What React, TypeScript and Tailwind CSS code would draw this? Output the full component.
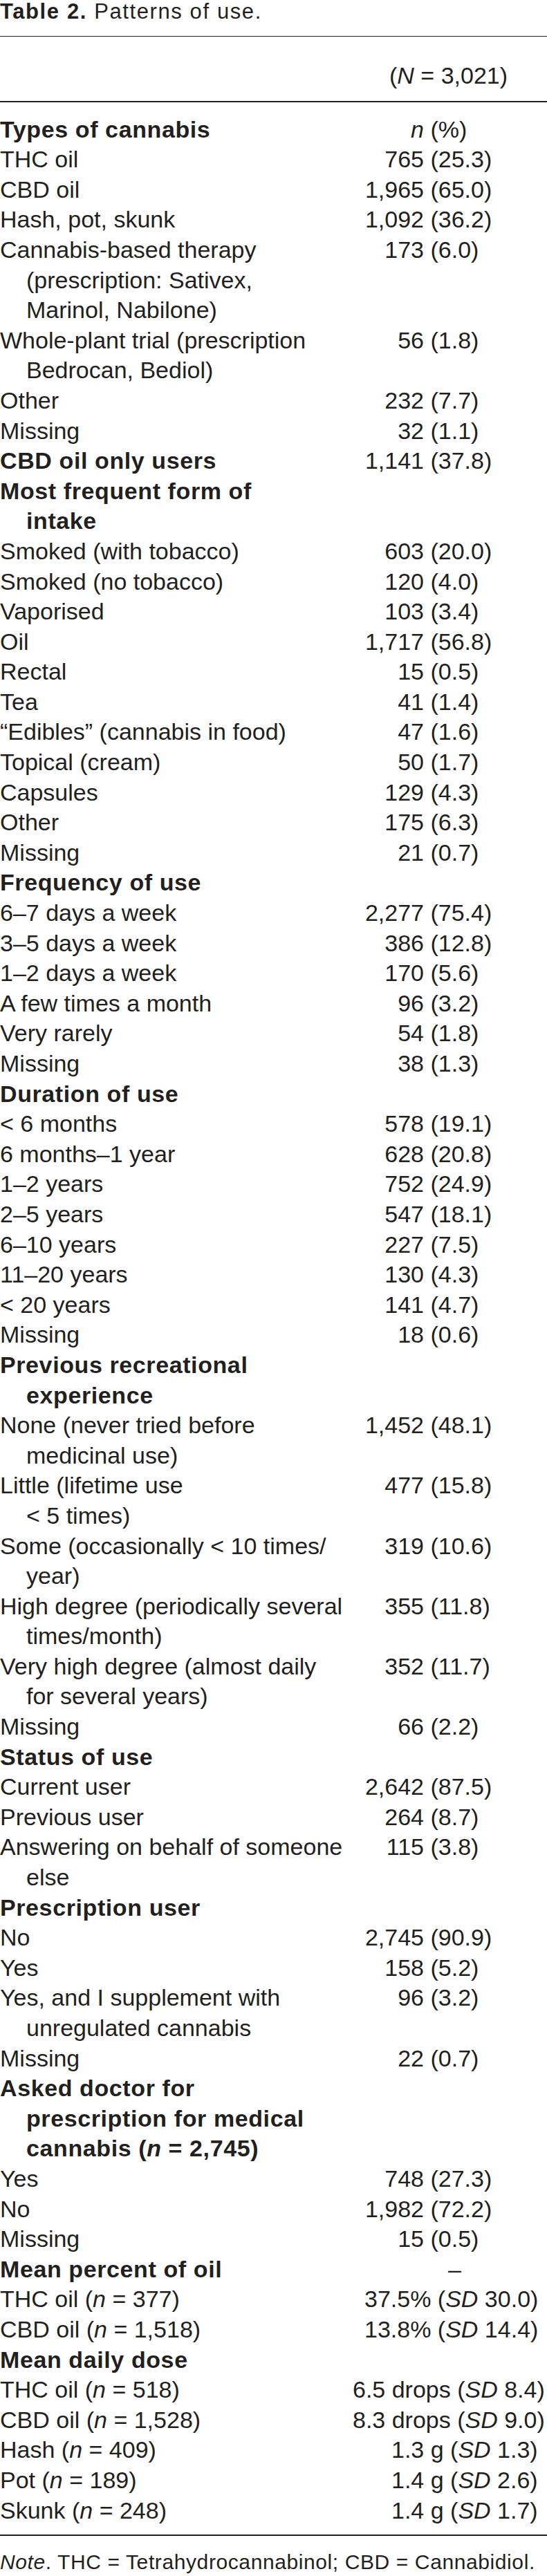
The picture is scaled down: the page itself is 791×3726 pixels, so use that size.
import type { ReactNode } from "react";

type Row = {
  label: ReactNode[];
  bold?: boolean;
  n?: ReactNode;
  p?: ReactNode;
  free?: ReactNode;
  ml?: string;
};

const I = ({ children }: { children: ReactNode }) => <span className="italic">{children}</span>;

const rows: Row[] = [
  { label: ["Types of cannabis"], bold: true, n: <I>n</I>, p: "(%)" },
  { label: ["THC oil"], n: "765", p: "(25.3)" },
  { label: ["CBD oil"], n: "1,965", p: "(65.0)" },
  { label: ["Hash, pot, skunk"], n: "1,092", p: "(36.2)" },
  { label: ["Cannabis-based therapy", "(prescription: Sativex,", "Marinol, Nabilone)"], n: "173", p: "(6.0)" },
  { label: ["Whole-plant trial (prescription", "Bedrocan, Bediol)"], n: "56", p: "(1.8)" },
  { label: ["Other"], n: "232", p: "(7.7)" },
  { label: ["Missing"], n: "32", p: "(1.1)" },
  { label: ["CBD oil only users"], bold: true, n: "1,141", p: "(37.8)" },
  { label: ["Most frequent form of", "intake"], bold: true },
  { label: ["Smoked (with tobacco)"], n: "603", p: "(20.0)" },
  { label: ["Smoked (no tobacco)"], n: "120", p: "(4.0)" },
  { label: ["Vaporised"], n: "103", p: "(3.4)" },
  { label: ["Oil"], n: "1,717", p: "(56.8)" },
  { label: ["Rectal"], n: "15", p: "(0.5)" },
  { label: ["Tea"], n: "41", p: "(1.4)" },
  { label: ["\u201cEdibles\u201d (cannabis in food)"], n: "47", p: "(1.6)" },
  { label: ["Topical (cream)"], n: "50", p: "(1.7)" },
  { label: ["Capsules"], n: "129", p: "(4.3)" },
  { label: ["Other"], n: "175", p: "(6.3)" },
  { label: ["Missing"], n: "21", p: "(0.7)" },
  { label: ["Frequency of use"], bold: true },
  { label: ["6\u20137 days a week"], n: "2,277", p: "(75.4)" },
  { label: ["3\u20135 days a week"], n: "386", p: "(12.8)" },
  { label: ["1\u20132 days a week"], n: "170", p: "(5.6)" },
  { label: ["A few times a month"], n: "96", p: "(3.2)" },
  { label: ["Very rarely"], n: "54", p: "(1.8)" },
  { label: ["Missing"], n: "38", p: "(1.3)" },
  { label: ["Duration of use"], bold: true },
  { label: ["< 6 months"], n: "578", p: "(19.1)" },
  { label: ["6 months\u20131 year"], n: "628", p: "(20.8)" },
  { label: ["1\u20132 years"], n: "752", p: "(24.9)" },
  { label: ["2\u20135 years"], n: "547", p: "(18.1)" },
  { label: ["6\u201310 years"], n: "227", p: "(7.5)" },
  { label: ["11\u201320 years"], n: "130", p: "(4.3)" },
  { label: ["< 20 years"], n: "141", p: "(4.7)" },
  { label: ["Missing"], n: "18", p: "(0.6)" },
  { label: ["Previous recreational", "experience"], bold: true },
  { label: ["None (never tried before", "medicinal use)"], n: "1,452", p: "(48.1)" },
  { label: ["Little (lifetime use", "< 5 times)"], n: "477", p: "(15.8)" },
  { label: ["Some (occasionally < 10 times/", "year)"], n: "319", p: "(10.6)" },
  { label: ["High degree (periodically several", "times/month)"], n: "355", p: "(11.8)" },
  { label: ["Very high degree (almost daily", "for several years)"], n: "352", p: "(11.7)" },
  { label: ["Missing"], n: "66", p: "(2.2)" },
  { label: ["Status of use"], bold: true },
  { label: ["Current user"], n: "2,642", p: "(87.5)" },
  { label: ["Previous user"], n: "264", p: "(8.7)" },
  { label: ["Answering on behalf of someone", "else"], n: "115", p: "(3.8)" },
  { label: ["Prescription user"], bold: true },
  { label: ["No"], n: "2,745", p: "(90.9)" },
  { label: ["Yes"], n: "158", p: "(5.2)" },
  { label: ["Yes, and I supplement with", "unregulated cannabis"], n: "96", p: "(3.2)" },
  { label: ["Missing"], n: "22", p: "(0.7)" },
  {
    label: ["Asked doctor for", "prescription for medical", <>cannabis (<I>n</I> = 2,745)</>],
    bold: true,
  },
  { label: ["Yes"], n: "748", p: "(27.3)" },
  { label: ["No"], n: "1,982", p: "(72.2)" },
  { label: ["Missing"], n: "15", p: "(0.5)" },
  { label: ["Mean percent of oil"], bold: true, free: "\u2013", ml: "ml-[148px]" },
  { label: [<>THC oil (<I>n</I> = 377)</>], free: <>37.5% (<I>SD</I> 30.0)</>, ml: "ml-[27px]" },
  { label: [<>CBD oil (<I>n</I> = 1,518)</>], free: <>13.8% (<I>SD</I> 14.4)</>, ml: "ml-[27px]" },
  { label: ["Mean daily dose"], bold: true },
  { label: [<>THC oil (<I>n</I> = 518)</>], free: <>6.5 drops (<I>SD</I> 8.4)</>, ml: "ml-[10px]" },
  { label: [<>CBD oil (<I>n</I> = 1,528)</>], free: <>8.3 drops (<I>SD</I> 9.0)</>, ml: "ml-[10px]" },
  { label: [<>Hash (<I>n</I> = 409)</>], free: <>1.3 g (<I>SD</I> 1.3)</>, ml: "ml-[66px]" },
  { label: [<>Pot (<I>n</I> = 189)</>], free: <>1.4 g (<I>SD</I> 2.6)</>, ml: "ml-[66px]" },
  { label: [<>Skunk (<I>n</I> = 248)</>], free: <>1.4 g (<I>SD</I> 1.7)</>, ml: "ml-[66px]" },
];

function TableRow({ row }: { row: Row }) {
  return (
    <div className="flex">
      <div className={`w-[500px] shrink-0 ${row.bold ? "font-bold tracking-[0.6px]" : ""}`}>
        {row.label.map((line, i) => (
          <div key={i} className={i > 0 ? "pl-[38px]" : ""}>
            {line}
          </div>
        ))}
      </div>
      <div className="flex">
        {row.free !== undefined ? (
          <span className={row.ml}>{row.free}</span>
        ) : row.n !== undefined ? (
          <>
            <span className="w-[113px] text-right">{row.n}</span>
            <span>&nbsp;{row.p}</span>
          </>
        ) : null}
      </div>
    </div>
  );
}

export default function App() {
  return (
    <div className="w-[791px] overflow-hidden whitespace-nowrap bg-white font-['Liberation_Sans',Arial,sans-serif] text-[#231f20]">
      <p className="text-[31px] leading-[33px] tracking-[1.6px]">
        <span className="font-bold">Table 2.</span> Patterns of use.
      </p>

      <div className="mt-[19px] h-px bg-[#231f20]" />

      <div className="mt-[35px] flex text-[34px] leading-[43.6px]">
        <div className="w-[500px] shrink-0" />
        <span className="ml-[63px]">
          (<I>N</I> = 3,021)
        </span>
      </div>

      <div className="mt-[14px] h-[2px] bg-[#231f20]" />

      <div className="mt-[18px] text-[34px] leading-[43.6px]">
        {rows.map((row, i) => (
          <TableRow key={i} row={row} />
        ))}
      </div>

      <div className="mt-[13px] h-[2px] bg-[#231f20]" />

      <p className="mt-[21px] text-[30px] leading-[33px] tracking-[0.6px]">
        <I>Note</I>. THC = Tetrahydrocannabinol; CBD = Cannabidiol.
      </p>
    </div>
  );
}
